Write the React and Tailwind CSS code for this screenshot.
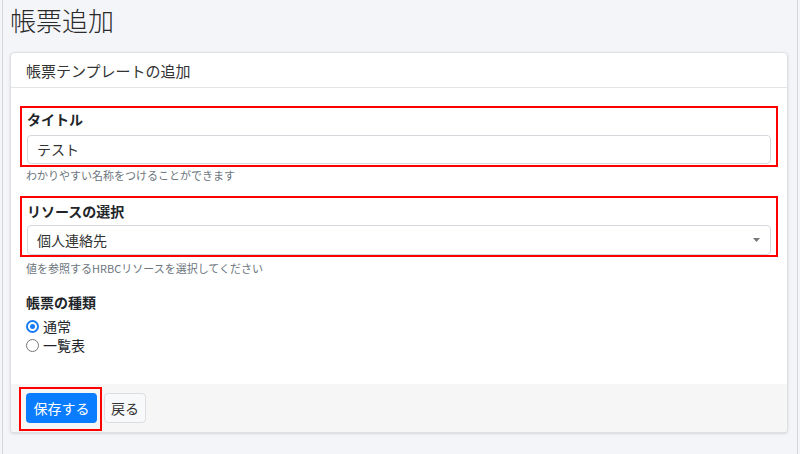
import React from 'react';

const font = { fontFamily: '"Noto Sans CJK JP", "Noto Sans", sans-serif' };

const Radio = ({ checked, label }) => (
  <label className="flex items-center h-[19px] gap-[4px] text-[14px] text-[#212529]">
    {checked ? (
      <span className="w-[13px] h-[13px] rounded-full border-[2px] border-[#1a7cf5] bg-white flex items-center justify-center">
        <span className="w-[5px] h-[5px] rounded-full bg-[#1a7cf5]" />
      </span>
    ) : (
      <span className="w-[13px] h-[13px] rounded-full border border-[#767676] bg-white" />
    )}
    <span className="leading-[19px]">{label}</span>
  </label>
);

const App = () => {
  return (
    <div className="w-[800px] h-[454px] bg-[#f4f5f8] px-[2px] overflow-hidden" style={font}>
      <div className="h-full border-x border-[#d4d5d9] px-[7px]">
        <h1 className="h-[40px] leading-[40px] text-[26px] text-[#2a2a2a] font-light">帳票追加</h1>

        <div className="mt-[12px] w-[778px] bg-white border border-[#dfe0e3] rounded-[4px] shadow-sm overflow-hidden">
          {/* header */}
          <div className="h-[35px] flex items-center pt-[3px] px-[15px] border-b border-[#e3e4e7] text-[15px] text-[#333]">
            帳票テンプレートの追加
          </div>

          {/* body */}
          <div className="pt-[18px] px-[9px]">
            <div className="border-2 border-[#ff0000] px-[5px] pt-[1px] pb-[1px]">
              <div className="h-[20px] leading-[20px] text-[14px] font-bold text-[#212529]">タイトル</div>
              <div className="mt-[6px] h-[29px] border border-[#d5d9de] rounded-[4px] flex items-center px-[9px] text-[14px] text-[#333]">
                テスト
              </div>
            </div>
            <div className="pl-[6px] h-[16px] leading-[16px] text-[11px] text-[#6c757d]">
              わかりやすい名称をつけることができます
            </div>

            <div className="mt-[13px] border-2 border-[#ff0000] px-[5px] pt-[3px]">
              <div className="h-[20px] leading-[20px] text-[14px] font-bold text-[#212529]">リソースの選択</div>
              <div className="mt-[4px] h-[30px] border border-[#d5d9de] rounded-[4px] flex items-center justify-between pl-[9px] pr-[10px] text-[14px] text-[#333]">
                <span>個人連絡先</span>
                <svg width="7" height="4" viewBox="0 0 7 4">
                  <path d="M0 0 L7 0 L3.5 4 Z" fill="#777" />
                </svg>
              </div>
            </div>
            <div className="mt-[3px] pl-[6px] h-[16px] leading-[16px] text-[11px] text-[#6c757d]">
              値を参照するHRBCリソースを選択してください
            </div>

            <div className="mt-[16px] pl-[6px]">
              <div className="h-[20px] leading-[20px] text-[14px] font-bold text-[#212529]">帳票の種類</div>
              <div className="mt-[5px] flex flex-col">
                <Radio checked label="通常" />
                <Radio label="一覧表" />
              </div>
            </div>
          </div>

          {/* footer */}
          <div className="mt-[29px] bg-[#f6f6f6] pl-[8px] pt-[3px] pb-[1px] flex items-start">
            <div className="border-2 border-[#ff0000] pl-[5px] pr-[3px] pt-[4px] pb-[6px]">
              <button className="w-[71px] h-[30px] rounded-[4px] bg-[#0a7cff] text-white text-[14px]">
                保存する
              </button>
            </div>
            <button className="ml-[2px] mt-[6px] w-[42px] h-[30px] rounded-[4px] bg-[#f8f9fa] border border-[#dcdde0] text-[14px] text-[#333]">
              戻る
            </button>
          </div>
        </div>
      </div>
    </div>
  );
};

export default App;
